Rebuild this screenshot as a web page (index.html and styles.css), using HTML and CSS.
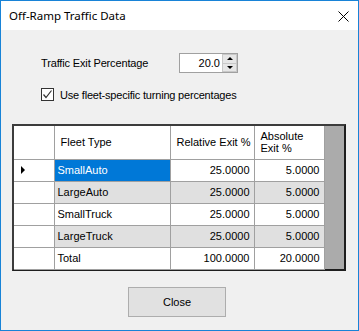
FILE: index.html
```html
<!DOCTYPE html>
<html lang="en">
<head>
  <meta charset="UTF-8">
  <title>Off-Ramp Traffic Data</title>
  <link rel="stylesheet" href="styles.css">
</head>
<body>

  <div class="window">
    <!-- Title bar -->
    <div class="titlebar">
      <span class="title">Off-Ramp Traffic Data</span>
      <svg class="close-x" width="11" height="11" viewBox="0 0 11 11">
        <path d="M0.5 0.5 L10.5 10.5 M10.5 0.5 L0.5 10.5" stroke="#000" stroke-width="1" fill="none"/>
      </svg>
    </div>

    <div class="content">
      <!-- Exit percentage -->
      <div class="field-row">
        <label class="field-label">Traffic Exit Percentage</label>
        <div class="spinner">
          <span class="spinner-value">20.0</span>
          <div class="spinner-buttons">
            <div class="spin-btn"><span class="arrow-up"></span></div>
            <div class="spin-btn"><span class="arrow-down"></span></div>
          </div>
        </div>
      </div>

      <!-- Checkbox -->
      <div class="check-row">
        <span class="checkbox">
          <svg width="11" height="11" viewBox="0 0 11 11">
            <path d="M1.5 5.5 L4 8.5 L9.5 1.5" stroke="#333" stroke-width="1.2" fill="none"/>
          </svg>
        </span>
        <span class="check-label">Use fleet-specific turning percentages</span>
      </div>

      <!-- Data grid -->
      <div class="grid">
        <table>
          <tr class="head">
            <th class="rowhead"></th>
            <th class="c-fleet">Fleet Type</th>
            <th class="c-rel">Relative Exit %</th>
            <th class="c-abs">Absolute<br>Exit %</th>
          </tr>
          <tr>
            <td class="rowhead"><span class="current"></span></td>
            <td class="selected">SmallAuto</td>
            <td class="num">25.0000</td>
            <td class="num">5.0000</td>
          </tr>
          <tr class="alt">
            <td class="rowhead"></td>
            <td>LargeAuto</td>
            <td class="num">25.0000</td>
            <td class="num">5.0000</td>
          </tr>
          <tr>
            <td class="rowhead"></td>
            <td>SmallTruck</td>
            <td class="num">25.0000</td>
            <td class="num">5.0000</td>
          </tr>
          <tr class="alt">
            <td class="rowhead"></td>
            <td>LargeTruck</td>
            <td class="num">25.0000</td>
            <td class="num">5.0000</td>
          </tr>
          <tr>
            <td class="rowhead"></td>
            <td>Total</td>
            <td class="num">100.0000</td>
            <td class="num">20.0000</td>
          </tr>
        </table>
      </div>

      <button class="close-btn">Close</button>
    </div>
  </div>

</body>
</html>
```

FILE: styles.css
```css
/* Reset */
* {
  margin: 0;
  padding: 0;
  box-sizing: border-box;
}

body {
  font-family: "Liberation Sans", Arial, sans-serif;
  font-size: 11px;
  color: #000;
  background: #f0f0f0;
}

/* Window frame */
.window {
  width: 359px;
  height: 331px;
  border: 1px solid #1883d7;
  background: #f0f0f0;
  display: flex;
  flex-direction: column;
}

.titlebar {
  height: 29px;
  background: #fff;
  display: flex;
  align-items: center;
  justify-content: space-between;
  padding: 0 9px 0 8px;
}

.title {
  font-family: "Segoe UI", "Noto Sans", sans-serif;
  font-size: 11.5px;
  color: #000;
}

.close-x {
  margin-top: 1px;
}

.content {
  flex: 1;
  display: flex;
  flex-direction: column;
}

/* Exit percentage row */
.field-row {
  display: flex;
  align-items: center;
  margin: 23px 0 0 40px;
  height: 20px;
}

.field-label {
  width: 138px;
  letter-spacing: -0.15px;
}

.spinner {
  width: 59px;
  height: 20px;
  border: 1px solid #a0a0a0;
  background: #fff;
  display: flex;
  align-items: center;
}

.spinner-value {
  flex: 1;
  text-align: right;
  padding-right: 2px;
}

.spinner-buttons {
  width: 15px;
  height: 18px;
  display: flex;
  flex-direction: column;
  border-left: 1px solid #c8c8c8;
}

.spin-btn {
  flex: 1;
  background: #e6e6e6;
  border: 1px solid #c8c8c8;
  border-left: none;
  display: flex;
  align-items: center;
  justify-content: center;
}

.spin-btn + .spin-btn {
  border-top: none;
}

.arrow-up {
  border-left: 3px solid transparent;
  border-right: 3px solid transparent;
  border-bottom: 3px solid #000;
}

.arrow-down {
  border-left: 3px solid transparent;
  border-right: 3px solid transparent;
  border-top: 3px solid #000;
}

/* Checkbox row */
.check-row {
  display: flex;
  align-items: center;
  margin: 15px 0 0 40px;
  height: 13px;
}

.checkbox {
  width: 13px;
  height: 13px;
  border: 1px solid #333;
  background: #fff;
  display: flex;
  align-items: center;
  justify-content: center;
  margin-right: 6px;
}

.check-label {
  letter-spacing: -0.2px;
}

/* Data grid */
.grid {
  margin: 23px 0 0 11px;
  width: 334px;
  height: 147px;
  border: 2px solid #1e1e1e;
  border-top-color: #3c3c3c;
  border-left-color: #3c3c3c;
  background: #ababab;
}

table {
  border-collapse: collapse;
  table-layout: fixed;
  width: 310px;
}

th,
td {
  border-right: 1px solid #a0a0a0;
  border-bottom: 1px solid #a0a0a0;
  background: #fff;
  height: 22px;
  padding: 0 3px;
  text-align: left;
  font-weight: normal;
  white-space: nowrap;
}

tr.head th {
  height: 33px;
  padding: 0 6px;
  line-height: 12px;
}

.rowhead {
  width: 40px;
}

.c-fleet {
  width: 116px;
}

.c-rel {
  width: 84px;
}

.c-abs {
  width: 70px;
}

tr.alt td {
  background: #e0e0e0;
}

tr.alt td.rowhead {
  background: #fff;
}

td.selected {
  background: #0078d7;
  color: #fff;
}

td.num {
  text-align: right;
  padding-right: 4px;
}

.current {
  display: block;
  margin-left: 4px;
  width: 0;
  height: 0;
  border-top: 4px solid transparent;
  border-bottom: 4px solid transparent;
  border-left: 4px solid #000;
}

/* Close button */
.close-btn {
  margin: 16px 0 0 127px;
  width: 98px;
  height: 30px;
  border: 1px solid #adadad;
  background: #e1e1e1;
  font-family: "Liberation Sans", Arial, sans-serif;
  font-size: 11px;
  color: #000;
}
```
